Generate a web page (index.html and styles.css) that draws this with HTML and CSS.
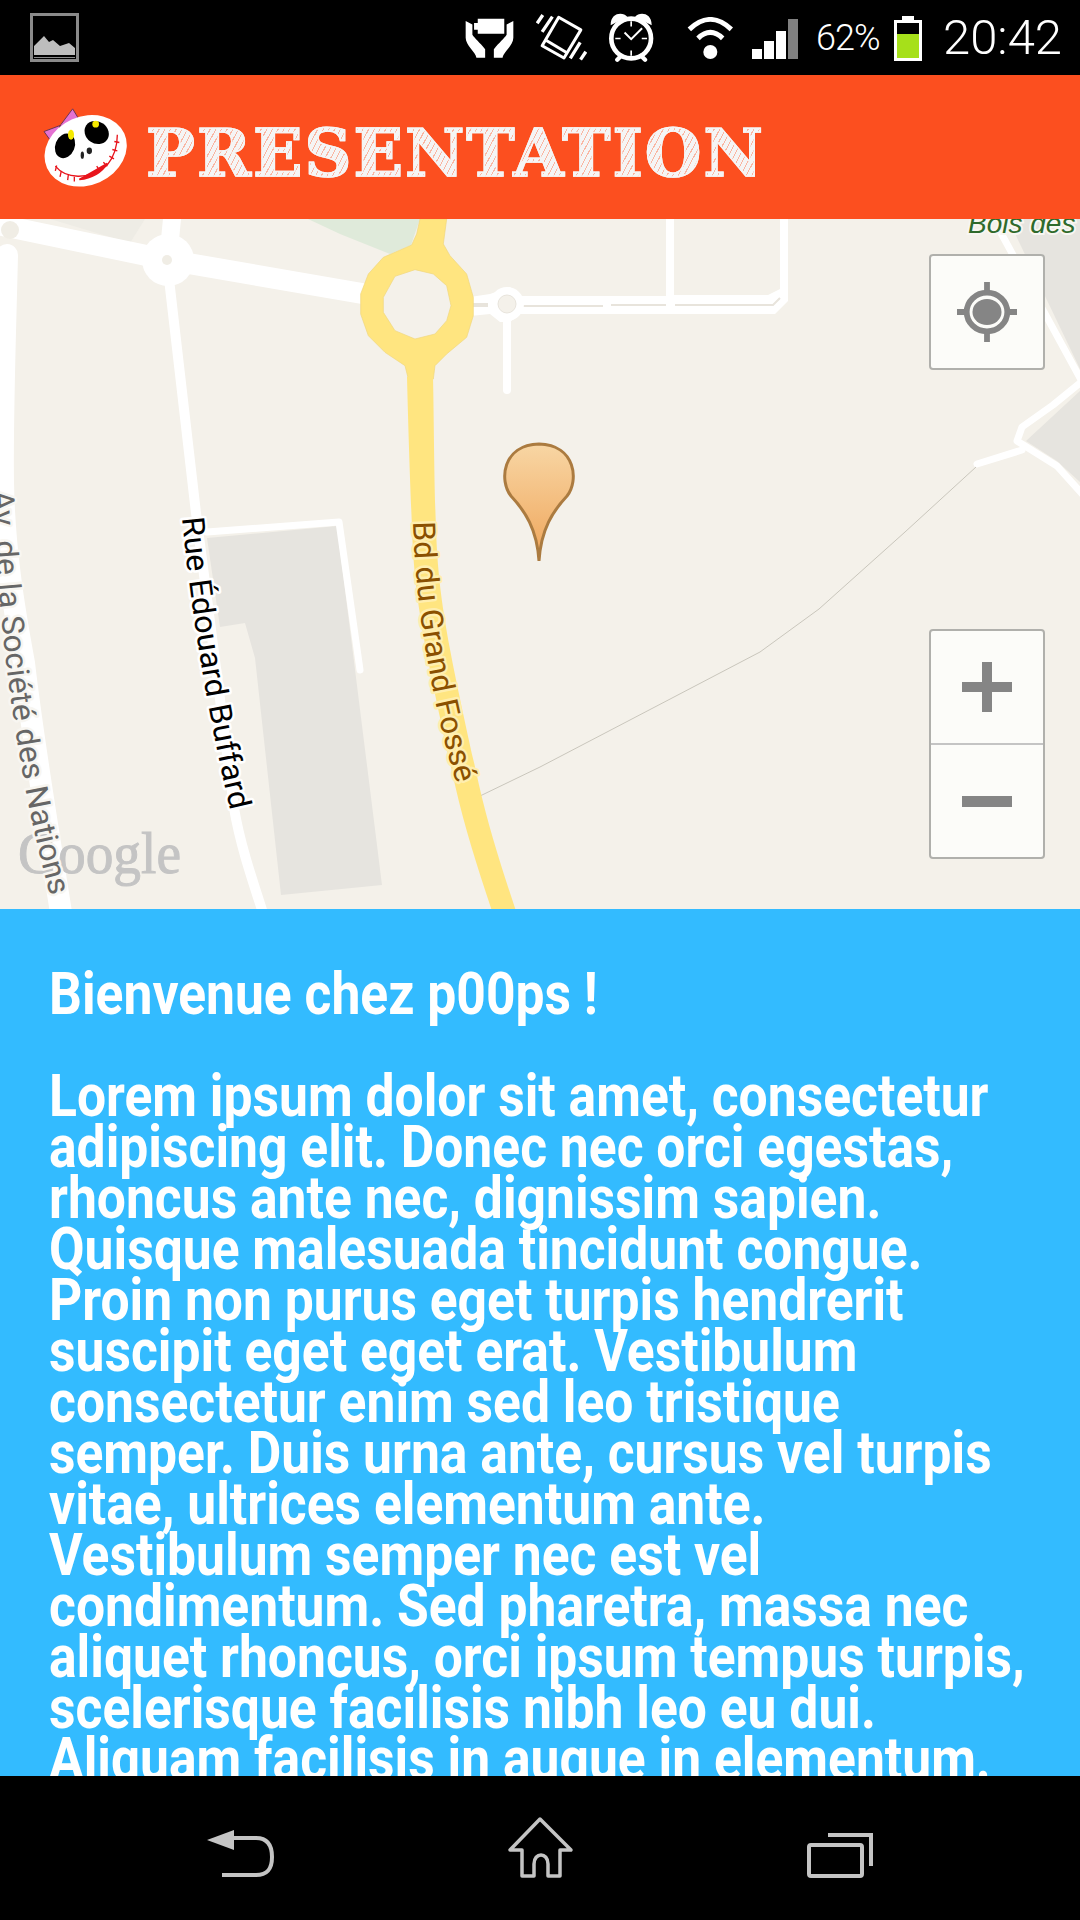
FILE: index.html
```html
<!DOCTYPE html>
<html lang="fr">
<head>
<meta charset="utf-8">
<title>Presentation</title>
<link rel="stylesheet" href="styles.css">
</head>
<body>
<div class="screen">
  <header class="status">
    <svg class="ic-picture" viewBox="0 0 49 49"><rect x="1.5" y="1.5" width="46" height="46" fill="#000" stroke="#8a8a8a" stroke-width="3"/><path d="M4 42V33L14 23L19 29L23 27L30 33L39 30L45 35V42Z" fill="#bdbdbd"/><path d="M4 44.5H45" stroke="#8a8a8a" stroke-width="1"/></svg>
    <div class="status-right">
      <svg class="ic-hands" viewBox="68 50 146 125"><path d="M70 62L90 72V103C97 114 112 126 128 146V171H102C100 155 70 135 70 112Z" fill="#fff"/><path d="M212 62L192 72V103C185 114 170 126 154 146V171H180C182 155 212 135 212 112Z" fill="#fff"/><path d="M106 55H185V100H106V88H95V68H106Z" fill="#fff"/></svg>
      <svg class="ic-vibrate" viewBox="282 42 153 142"><path d="M350 52L417 90L366 175L300 138Z" fill="none" stroke="#fff" stroke-width="9" stroke-linejoin="round"/><path d="M313 122L376 160" stroke="#fff" stroke-width="9"/><path d="M302 45L285 70M331 50L300 96M415 128L385 176M432 156L416 180" stroke="#fff" stroke-width="10"/></svg>
      <svg class="ic-alarm" viewBox="505 40 136 146"><circle cx="572" cy="116" r="60" fill="none" stroke="#fff" stroke-width="14"/><path d="M510 76C510 36 548 36 560 50ZM634 76C634 36 596 36 584 50Z" fill="#fff"/><path d="M530 180L542 168M614 180L602 168" stroke="#fff" stroke-width="13" stroke-linecap="round"/><path d="M572 64V80M572 152V168M524 116H540M604 116H620" stroke="#fff" stroke-width="5"/><path d="M552 98L572 118L605 85" fill="none" stroke="#fff" stroke-width="6"/></svg>
      <svg class="ic-wifi" viewBox="740 48 138 126"><circle cx="810" cy="153" r="21" fill="#fff"/><path d="M747 85C790 45 830 45 873 85" fill="none" stroke="#fff" stroke-width="15"/><path d="M773 112C798 88 822 88 847 112" fill="none" stroke="#fff" stroke-width="15"/></svg>
      <svg class="ic-signal" viewBox="0 0 46 40"><rect x="0" y="30" width="10" height="10" fill="#fff"/><rect x="12" y="22" width="10" height="18" fill="#fff"/><rect x="24" y="12" width="10" height="28" fill="#fff"/><rect x="36" y="0" width="10" height="40" fill="#808080"/></svg>
      <span class="pct">62%</span>
      <svg class="ic-battery" viewBox="0 0 30 45"><path d="M9 0H21V4H29V45H1V4H9Z" fill="#fff"/><rect x="4" y="7" width="22" height="35" fill="#000"/><rect x="4" y="18" width="22" height="24" fill="#a6e01a"/></svg>
      <span class="time">20:42</span>
    </div>
  </header>

  <div class="appbar">
    <svg class="logo" viewBox="60 40 270 260">
      <path d="M72 122L120 104L118 136L92 150Z" fill="#e472d2" stroke="#6d3550" stroke-width="3"/>
      <path d="M122 102L158 54L176 84L134 106L118 112Z" fill="#e472d2" stroke="#6d3550" stroke-width="3"/>
      <ellipse cx="197" cy="180" rx="127" ry="103" transform="rotate(-24 197 180)" fill="#fff"/>
      <ellipse cx="135" cy="165" rx="29" ry="38" transform="rotate(22 135 165)" fill="#000"/>
      <ellipse cx="230" cy="125" rx="38" ry="33" transform="rotate(35 230 125)" fill="#000"/>
      <ellipse cx="153" cy="132" rx="9" ry="15" fill="#f5e900"/>
      <circle cx="227" cy="100" r="10" fill="#f5e900"/>
      <ellipse cx="208" cy="180" rx="8" ry="10" fill="#222"/>
      <ellipse cx="187" cy="193" rx="5" ry="11" fill="#222"/>
      <path d="M106 226C135 262 205 272 262 222C282 198 292 170 292 132" fill="none" stroke="#e8141c" stroke-width="4"/>
      <path d="M178 266C215 262 245 244 262 218C238 232 208 250 178 266Z" fill="#e8141c" stroke="#e8141c" stroke-width="5"/>
      <path d="M110 224L106 240M124 240L120 258M145 252L143 268M163 258L163 272M230 226L240 240M250 214L262 226M268 196L282 204M277 176L292 180M283 152L298 155" stroke="#e8141c" stroke-width="4"/>
    </svg>
    <h1 class="title">PRESENTATION</h1>
  </div>

  <section class="map">
    <svg class="map-canvas" viewBox="0 0 1080 690">
      <rect width="1080" height="690" fill="#f4f1ea"/>
      <path d="M50 0H145L130 24Z" fill="#eeece5"/>
      <path d="M207 319L337 307L382 666L281 676L255 439L245 404L220 408Z" fill="#e6e4df"/>
      <path d="M1008 0H1080V150Z" fill="#e6e4df"/>
      <path d="M1026 222L1080 172V263L1057 242Z" fill="#e6e4df"/>

      <g fill="none" stroke="#fff" stroke-linecap="round" stroke-linejoin="round">
        <path d="M7 36C5 120 2 200 3 263C4 330 14 390 24 444C34 530 48 610 62 700" stroke-width="22"/>
        <path d="M0 6L168 41L365 75" stroke-width="21"/>
        <path d="M172 0L168 41" stroke-width="18"/>
        <path d="M169 60L196 294L234 589C240 625 252 660 265 700" stroke-width="10"/>
        <path d="M207 313L339 303L360 451" stroke-width="7"/>
        <path d="M507 90V171" stroke-width="8"/>
        <path d="M1001 14L1085 168" stroke-width="7"/>
        <path d="M1085 160L1053 186L1022 208L1017 222L1057 247L1085 278" stroke-width="7"/>
        <path d="M977 245L1022 231" stroke-width="7"/>
      </g>
      <path d="M470 78L490 75L510 68L520 77H666V0H674V76H768L780 70V0H788V82L775 95H520L510 103H500L490 95L470 97Z" fill="#fff"/>
      <path d="M523 87H603M611 86H666M675 86H773L780 79" fill="none" stroke="#e8e4dc" stroke-width="2"/>
      <rect x="472" y="84" width="16" height="4" fill="#e8e4dc"/>
      <circle cx="168" cy="41" r="26" fill="#fff"/>
      <circle cx="167" cy="41" r="5" fill="#f0ede5"/>
      <circle cx="507" cy="85" r="17" fill="#fff"/>
      <circle cx="507" cy="85" r="9" fill="#f4f1ea" stroke="#e8e4dc"/>
      <circle cx="10" cy="11" r="9" fill="#f0ede5"/>
      <path d="M976 248L905 313L819 390L760 433L674 478L540 548L480 577" fill="none" stroke="#c9c6bc" stroke-width="1"/>

      <path d="M308 0H420L411 26L390 35L340 15Z" fill="#dfeada"/>
      <g transform="translate(340 0) scale(0.33333)">
        <path fill-rule="evenodd" d="M240 0L230 45L215 78L130 115L85 165L62 225V285L85 350L135 400L195 440L205 480H280L285 440L320 405L380 355L400 290V235L380 165L330 110L310 75L320 0ZM225 152L165 172L130 235V280L165 335L225 360L285 345L320 305L333 260L320 200L280 165Z" fill="#ffe580" stroke="#f0d77c" stroke-width="2"/>
      </g>
      <path d="M407 158C408 200 410 263 412 308C414 380 425 430 455 566C465 610 478 650 493 695H517C502 650 489 610 479 566C449 430 438 380 436 308C434 263 434 200 433 158Z" fill="#ffe580"/>

      <text class="google" x="18" y="654" textLength="163" lengthAdjust="spacingAndGlyphs">Google</text>

      <path id="path-av" d="M-8 272C-2 396 14 546 50 676" fill="none"/>
      <path id="path-rue" d="M182 299C190 385 207 495 232 598" fill="none"/>
      <path id="path-bd" d="M413 303C415 382 430 477 457 567" fill="none"/>
      <text class="label label-av"><textPath href="#path-av" textLength="410" lengthAdjust="spacingAndGlyphs">Av. de la Société des Nations</textPath></text>
      <text class="label label-rue"><textPath href="#path-rue" textLength="297" lengthAdjust="spacingAndGlyphs">Rue Édouard Buffard</textPath></text>
      <text class="label label-bd"><textPath href="#path-bd" textLength="266" lengthAdjust="spacingAndGlyphs">Bd du Grand Fossé</textPath></text>
      <text class="label-bois" x="968" y="14">Bois des</text>

      <defs>
        <linearGradient id="pin-fill" x1="0" y1="0" x2="0" y2="1">
          <stop offset="0" stop-color="#f8d6a4"/>
          <stop offset="1" stop-color="#efa55a"/>
        </linearGradient>
      </defs>
      <path d="M539 342C537 310 525 292 511 277C499 262 502 226 539 225C576 226 579 262 567 277C553 292 541 310 539 342Z" fill="url(#pin-fill)" stroke="#ab7b40" stroke-width="3"/>
    </svg>

    <button class="map-btn locate" type="button" aria-label="Ma position">
      <svg class="ctl-locate" viewBox="0 0 62 62"><ellipse cx="31" cy="31" rx="21" ry="20" fill="none" stroke="#858585" stroke-width="6"/><ellipse cx="31" cy="31" rx="15" ry="13.5" fill="#858585"/><path d="M31 0V10M31 52V62M0 31H10M52 31H62" stroke="#858585" stroke-width="6"/></svg>
    </button>
    <div class="zoom-ctl">
      <button class="zoom-btn" type="button" aria-label="Zoom avant"><svg class="ctl-zoom" viewBox="0 0 50 50"><path d="M20 0H30V20H50V30H30V50H20V30H0V20H20Z" fill="#858585"/></svg></button>
      <button class="zoom-btn" type="button" aria-label="Zoom arrière"><svg class="ctl-zoom" viewBox="0 0 50 50"><rect y="20" width="50" height="11" fill="#858585"/></svg></button>
    </div>
  </section>

  <main class="content">
    <div class="copy">
      <h2 class="heading">Bienvenue chez p00ps !</h2>
      <p class="body">
        <span>Lorem ipsum dolor sit amet, consectetur</span>
        <span>adipiscing elit. Donec nec orci egestas,</span>
        <span>rhoncus ante nec, dignissim sapien.</span>
        <span>Quisque malesuada tincidunt congue.</span>
        <span>Proin non purus eget turpis hendrerit</span>
        <span>suscipit eget eget erat. Vestibulum</span>
        <span>consectetur enim sed leo tristique</span>
        <span>semper. Duis urna ante, cursus vel turpis</span>
        <span>vitae, ultrices elementum ante.</span>
        <span>Vestibulum semper nec est vel</span>
        <span>condimentum. Sed pharetra, massa nec</span>
        <span>aliquet rhoncus, orci ipsum tempus turpis,</span>
        <span>scelerisque facilisis nibh leo eu dui.</span>
        <span>Aliquam facilisis in augue in elementum.</span>
      </p>
    </div>
  </main>

  <nav class="navbar">
    <svg class="nav-ic" viewBox="200 1808 80 80"><path d="M207 1840L234 1830V1850Z" fill="#c4c4c4"/><path d="M232 1838H256C268 1838 272 1846 272 1857C272 1868 268 1875 256 1875H222" fill="none" stroke="#c4c4c4" stroke-width="4"/></svg>
    <svg class="nav-ic" viewBox="500 1808 80 80"><path d="M540 1819L571 1850H560V1876H548V1864C548 1852 534 1852 534 1864V1876H522V1850H510Z" fill="none" stroke="#c4c4c4" stroke-width="3.5" stroke-linejoin="round"/></svg>
    <svg class="nav-ic" viewBox="800 1808 80 80"><rect x="809" y="1845" width="53" height="31" rx="2" fill="none" stroke="#c4c4c4" stroke-width="4"/><path d="M828 1835H871V1866" fill="none" stroke="#c4c4c4" stroke-width="4"/></svg>
  </nav>
</div>
</body>
</html>
```
FILE: styles.css
```css
* { box-sizing: border-box; margin: 0; padding: 0; }
html, body { background: #000; }
body { font-family: Roboto, "Liberation Sans", sans-serif; }

.screen {
  width: 1080px;
  height: 1920px;
  display: flex;
  flex-direction: column;
  overflow: hidden;
}

/* status bar */
.status {
  height: 75px;
  flex: none;
  background: #000;
  display: flex;
  align-items: center;
  justify-content: space-between;
  padding: 0 20px 0 30px;
  color: #fff;
}
.status-right { display: flex; align-items: center; }
.ic-picture { width: 49px; height: 49px; }
.ic-hands { width: 49px; height: 42px; margin-right: 22px; }
.ic-vibrate { width: 51px; height: 47px; margin-right: 22px; }
.ic-alarm { width: 45px; height: 49px; margin-right: 33px; }
.ic-wifi { width: 46px; height: 42px; margin-right: 19px; }
.ic-signal { width: 46px; height: 40px; margin-right: 18px; margin-top: 2px; }
.ic-battery { width: 30px; height: 45px; margin-right: 20px; margin-top: 2px; }
.pct { font-size: 36px; font-weight: 300; width: 64px; margin-right: 13px; letter-spacing: -1px; white-space: nowrap; }
.time { font-size: 49px; font-weight: 300; width: 117px; white-space: nowrap; }

/* app bar */
.appbar {
  height: 144px;
  flex: none;
  background: #fc4f1f;
  display: flex;
  align-items: center;
  padding-left: 40px;
  gap: 16px;
}
.logo { width: 90px; height: 87px; flex: none; margin-top: 1px; }
.title {
  font-family: "DejaVu Serif", serif;
  font-weight: 700;
  font-size: 65px;
  line-height: 1;
  letter-spacing: 2px;
  margin-top: 12px;
  white-space: nowrap;
  color: transparent;
  -webkit-text-stroke: 1.5px #f5f5f5;
  background-image:
    repeating-linear-gradient(118deg, rgba(252, 130, 95, 0.55) 0 1px, transparent 1px 5px),
    linear-gradient(#f5f5f5, #f5f5f5);
  -webkit-background-clip: text;
  background-clip: text;
}

/* map */
.map { position: relative; height: 690px; flex: none; background: #f4f1ea; overflow: hidden; }
.map-canvas { display: block; width: 1080px; height: 690px; }
.label {
  font-family: Roboto, sans-serif;
  font-size: 31px;
  paint-order: stroke;
  stroke-width: 5px;
  stroke-linejoin: round;
}
.label-av { fill: #666; stroke: #f8f6f1; }
.label-rue { fill: #000; stroke: #fff; }
.label-bd { fill: #8a5000; stroke: #ffeeae; }
.label-bois {
  font-family: "Liberation Sans", sans-serif;
  font-style: italic;
  font-size: 28px;
  fill: #2f6a2b;
  paint-order: stroke;
  stroke: #f8f6f1;
  stroke-width: 4px;
}
.google {
  font-family: "Liberation Serif", serif;
  font-size: 60px;
  fill: #c4c4c4;
  stroke: #c4c4c4;
  stroke-width: 1px;
}
.map-btn, .zoom-ctl {
  position: absolute;
  right: 35px;
  width: 116px;
  background: #fcfcf9;
  border: 2px solid #b0b0ac;
  border-radius: 4px;
}
.map-btn { top: 35px; height: 116px; display: flex; align-items: center; justify-content: center; }
.ctl-locate { width: 60px; height: 60px; }
.zoom-ctl { top: 410px; height: 230px; display: flex; flex-direction: column; }
.zoom-btn {
  flex: 1;
  background: none;
  border: 0;
  display: flex;
  align-items: center;
  justify-content: center;
}
.zoom-btn + .zoom-btn { border-top: 2px solid #c4c4c4; }
.ctl-zoom { width: 50px; height: 50px; }

/* text */
.content {
  flex: 1;
  min-height: 0;
  overflow: hidden;
  background: #33bbff;
  padding: 59px 0 0 49px;
  color: #fff;
}
.copy { transform: scaleX(0.86); transform-origin: left top; white-space: nowrap; }
.heading, .body { font-size: 60px; line-height: 51px; font-weight: 700; }
.heading { margin-bottom: 51px; }
.body span { display: block; }

/* nav */
.navbar {
  height: 144px;
  flex: none;
  background: #000;
  display: grid;
  grid-template-columns: repeat(3, 300px);
  justify-content: center;
  justify-items: center;
  align-items: center;
}
.nav-ic { width: 80px; height: 80px; }
```
